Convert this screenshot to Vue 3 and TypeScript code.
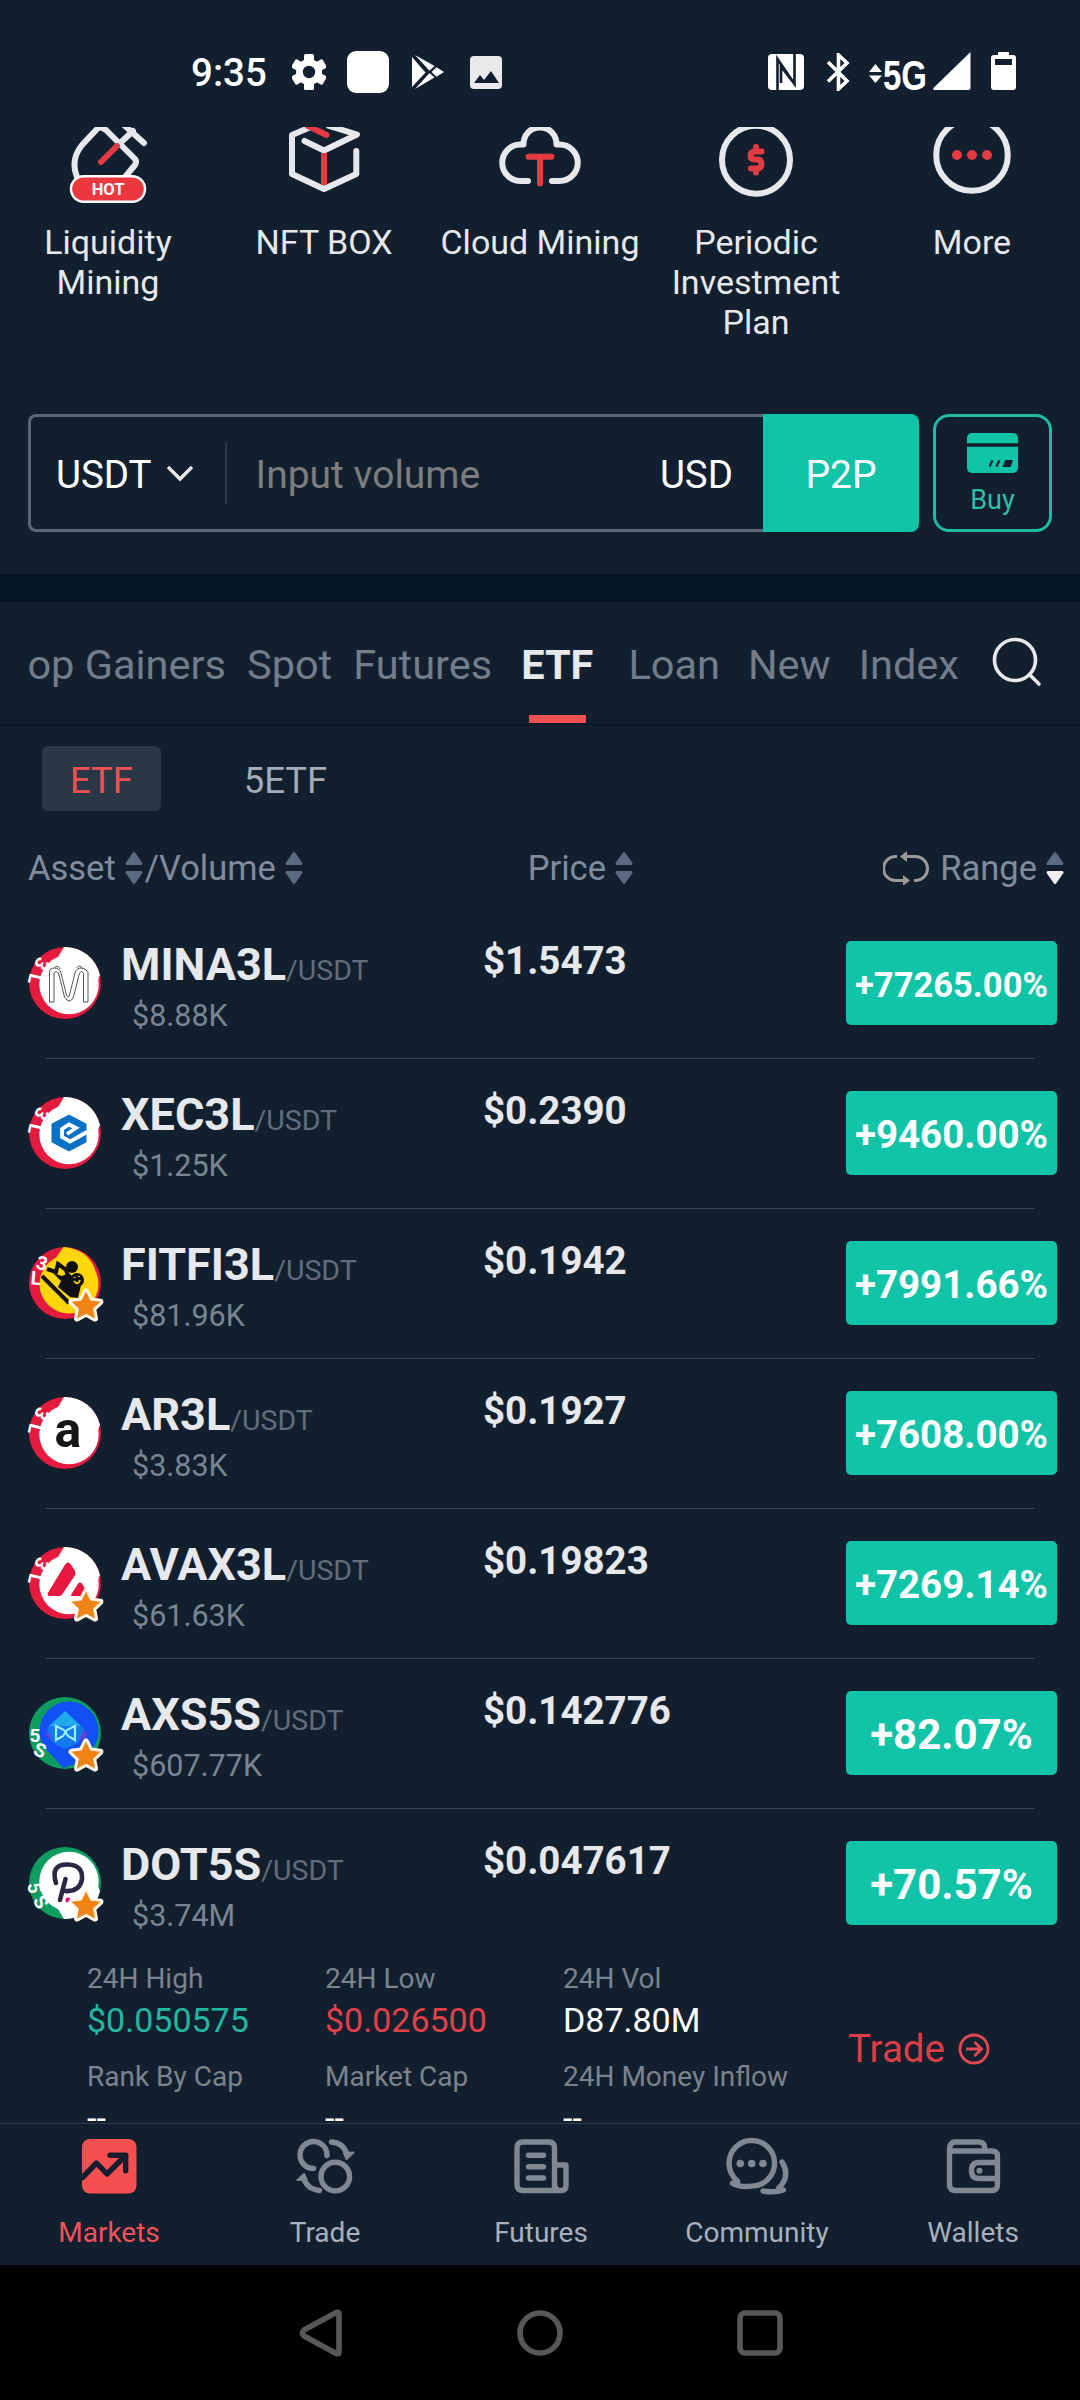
<template>
  <div class="screen">
    <!-- 状态栏 -->
    <div class="status-bar">
      <div class="status-left">
        <span class="time">9:35</span>
        <svg class="gear" width="34" height="36" viewBox="0 0 34 36">
          <g transform="translate(17 18)" fill="#fff">
            <rect v-for="n in 3" :key="n" x="-5" y="-18" width="10" height="36" rx="1.5" :transform="`rotate(${n * 60})`" />
            <circle r="13" />
            <circle r="6.2" fill="#121f2f" />
          </g>
        </svg>
        <span class="white-box"></span>
        <svg class="play" width="34" height="36" viewBox="0 0 34 36" fill="#fff">
          <path d="M1 3v30l13.500-14.600z" />
          <path d="M4 1l19.500 11-5 4.800z" />
          <path d="M4 35l19.500-11.500-5-4.500z" />
          <path d="M25.500 13.200l7.500 4.800-7.500 4.700-5-4.700z" />
        </svg>
        <svg class="photo" width="32" height="33" viewBox="0 0 32 33">
          <rect width="32" height="33" rx="4" fill="#e7e9eb" />
          <path d="M4 27l6-8 4 5 7-9 8 12z" fill="#121f2f" />
        </svg>
      </div>
      <div class="status-right">
        <svg class="nfc" width="36" height="36" viewBox="0 0 36 36">
          <rect width="36" height="36" rx="4" fill="#fff" />
          <path d="M9.500 36V5l17 25V15.500M26.500 0v30L13 12.500V29" fill="none" stroke="#121f2f" stroke-width="2.600" />
        </svg>
        <svg class="bt" width="24" height="38" viewBox="0 0 24 38" fill="none" stroke="#fff" stroke-width="3.600">
          <path d="M1 9l19 19-8.500 8V2l8.500 8L1 28.500" />
        </svg>
        <svg class="net" width="60" height="36" viewBox="0 0 60 36" fill="#fff">
          <path d="M0 15l6.500-8 6.500 8zM0 18.500l6.500 7.500 6.500-7.500z" />
          <text x="14" y="33" font-size="42" font-weight="700" textLength="44" lengthAdjust="spacingAndGlyphs">5G</text>
        </svg>
        <svg class="signal" width="38" height="38" viewBox="0 0 38 38" fill="#fff">
          <path d="M37.500 0v36q0 2-2 2H1.500q-2-.5-.8-2.200z" />
        </svg>
        <svg class="battery" width="25" height="38" viewBox="0 0 25 38">
          <path d="M7 0h11v3h4q3 0 3 3v29q0 3-3 3H3q-3 0-3-3V6q0-3 3-3h4z" fill="#fff" />
          <rect x="4" y="7" width="17" height="6" fill="#121f2f" />
        </svg>
      </div>
    </div>

    <div class="content">
      <!-- 快捷入口 -->
      <div class="menu">
        <div v-for="item in menuItems" :key="item.id" class="menu-item">
          <svg class="menu-icon" width="88" height="80" viewBox="-4 0 88 80">
            <g v-if="item.id === 'liquidity'">
              <path d="M57 50l10-12q2-3 0-6L39 4Q34-1 30 1L14 18Q2 33 9 50M50 18L65 4M56-2l20 18" />
              <path class="red" d="M33 35l16-16" />
              <rect x="3" y="49.200" width="74" height="25.600" rx="12.800" class="hot-bg" />
              <text x="40" y="68" class="hot-text">HOT</text>
            </g>
            <g v-else-if="item.id === 'nft'">
              <path d="M29-1L8 8v39l32 15 32.300-15V24M45-1l28 8.500L40 23.500 20.500 14" />
              <path class="red" d="M24-1l18.500 9" />
              <path class="red butt" d="M40 26v32" />
            </g>
            <g v-else-if="item.id === 'cloud'">
              <path d="M28 54h-7.500a18.250 18.250 0 0 1 0-36.500h3C23.500 8 30 .5 40 .5s16.500 7.500 16.500 17h3a18.250 18.250 0 0 1 0 36.500H52" />
              <path class="red" d="M28.500 29.700h23M40 30v26.500" />
            </g>
            <g v-else-if="item.id === 'plan'">
              <circle cx="40" cy="32.700" r="34" />
              <path class="red" d="M45.500 24.500h-6q-5 0-5 4t5 4h1q5 0 5 4.500t-5 4.500h-5.500M40 20v3M40 42.500v3" />
            </g>
            <g v-else>
              <circle cx="40" cy="28" r="35.800" />
              <circle v-for="x in [25, 40, 55]" :key="x" class="dot" :cx="x" cy="28" r="5" />
            </g>
          </svg>
          <span class="menu-label">{{ item.label }}</span>
        </div>
      </div>

      <!-- 快捷买币 -->
      <div class="quick-buy">
        <div class="input-box">
          <span class="coin">USDT</span>
          <svg class="chevron" width="28" height="18" viewBox="0 0 28 18">
            <path d="M2 3l12 12L26 3" fill="none" stroke="#e6e8ec" stroke-width="3.400" />
          </svg>
          <span class="split"></span>
          <span class="placeholder">Input volume</span>
          <span class="fiat">USD</span>
        </div>
        <button class="p2p-btn">P2P</button>
        <button class="buy-btn">
          <svg width="51" height="40" viewBox="0 0 52 40" preserveAspectRatio="none">
            <rect width="52" height="40" rx="5" fill="#11c3a7" />
            <path d="M0 12h52" stroke="#121f2f" stroke-width="3.500" />
            <path d="M23 33.500l3-6M30 33.500l3-6" stroke="#121f2f" stroke-width="2.200" />
            <path d="M36 34l3-7h8l-2.500 7z" fill="#121f2f" />
          </svg>
          <span>Buy</span>
        </button>
      </div>

      <div class="band"></div>

      <!-- 行情分类 -->
      <div class="tabs">
        <div
          v-for="tab in tabs"
          :key="tab"
          class="tab"
          :class="[tab.toLowerCase().replace(' ', '-'), { active: tab === activeTab }]"
          @click="activeTab = tab"
        >
          <span>{{ tab }}</span>
        </div>
        <svg class="search" width="50" height="50" viewBox="0 0 50 50" fill="none" stroke="#e6e8ec" stroke-width="3.600">
          <circle cx="23" cy="23" r="20.500" />
          <path d="M37.500 37.500L47 47" stroke-linecap="round" />
        </svg>
      </div>

      <div class="sub-tabs">
        <span
          v-for="sub in subTabs"
          :key="sub"
          class="sub-tab"
          :class="{ active: sub === activeSub }"
          @click="activeSub = sub"
        >{{ sub }}</span>
      </div>

      <!-- 表头 -->
      <div class="list-header">
        <div v-for="col in columns" :key="col.key" class="col" :class="col.key">
          <svg v-if="col.key === 'range'" class="loop" width="46" height="34" viewBox="0 0 46 34">
            <path d="M14 5.500h-1.500a11 11 0 0 0 0 24H22M22 5.500h10.500a11 11 0 0 1 0 24H31" fill="none" stroke="#9a9a9a" stroke-width="3" />
            <path d="M17 5.500l7-5.500v11zM27 29.500l-7-5.500v11z" fill="#9a9a9a" />
          </svg>
          <span>{{ col.label }}</span>
          <svg class="sort" width="18" height="32" viewBox="0 0 18 32">
            <path d="M9 1.500l7 10H2z" fill="#5d6b82" stroke="#5d6b82" stroke-width="3" stroke-linejoin="round" />
            <path
              d="M9 30.500l7-10H2z"
              :fill="col.desc ? '#f0f0f0' : '#5d6b82'"
              :stroke="col.desc ? '#f0f0f0' : '#5d6b82'"
              stroke-width="3"
              stroke-linejoin="round"
            />
          </svg>
        </div>
      </div>

      <!-- 币种列表 -->
      <div v-for="row in rows" :key="row.name" class="row">
        <svg class="coin-icon" width="72" height="72" viewBox="0 0 72 72">
          <circle cx="36" cy="36" r="36" :fill="row.short ? '#0f9d5f' : '#e41a3f'" />

          <g v-if="row.name === 'FITFI3L'">
            <circle cx="40" cy="37" r="29.500" fill="#ffd60a" />
            <path d="M34.500 0Q58 2 66 22L52 40 22 18z" fill="#ffd60a" />
            <path d="M13 29l27 27M18 22l9 3 2-8 8 6 3 10" fill="none" stroke="#111" stroke-width="4" />
            <path d="M24 26l9 3 7-3 12 12-3 13-8-1-12-10 3-6z" fill="#111" />
            <circle cx="43" cy="20" r="6" fill="#111" />
            <circle cx="48" cy="33" r="7" fill="#111" />
            <path d="M45 34q4 5 6-1M45.500 30v1M50 29v1" fill="none" stroke="#ffd60a" stroke-width="1.800" />
          </g>
          <g v-else-if="row.name === 'AXS5S'">
            <circle cx="40" cy="34" r="29.500" fill="#124ff5" />
            <path d="M14 48L34 71 56 64 52 40z" fill="#124ff5" />
            <path d="M16 37l8-8v16zM59 37l-8-8v16z" fill="#6a3fd8" />
            <path d="M36 14l19 18-6 14-13 6-12-6-6-14z" fill="#1478ee" />
            <path d="M36 14l16 15H20z" fill="#1fa9e8" />
            <path d="M27 29v14l7-4 4-6 8-4v14l-7-4-4-6z" fill="none" stroke="#9af0ff" stroke-width="2.200" />
          </g>
          <g v-else>
            <circle cx="40" :cy="row.short ? 34.500 : 37.500" r="29.700" fill="#fff" />
            <path v-if="row.short" d="M35 72A36 36 0 0 0 71 44L60 18 22 50z" fill="#fff" />
            <path v-else d="M35 0A36 36 0 0 1 71 28L60 54 22 22z" fill="#fff" />
          </g>

          <g v-if="row.name === 'MINA3L'" fill="none" stroke="#555" stroke-width="1">
            <path d="M20.500 55V25q0-4 5-4t6.500 5l5.500 22q1.500 4 3 0L46 26q1.500-5 6-5t7 4v30h-4.500V26q-2-3-4 0l-6 24q-4 8-9 0l-6-24q-2.500-3-4.500 0v29z" />
            <path d="M25.500 21q3-4 5.500 1M47.500 21q3-4 6 0" />
          </g>
          <g v-else-if="row.name === 'XEC3L'">
            <path d="M40 18l17 9v18l-17 9-17-9V27z" fill="#0a71c6" stroke="#0a71c6" stroke-linejoin="round" />
            <path d="M58 35L41 44.500l-8-4.500v-8l7-4.500 7 3.500-9 6" fill="none" stroke="#fff" stroke-width="3.800" />
          </g>
          <text v-else-if="row.name === 'AR3L'" class="ar-text" x="39" y="49.500">a</text>
          <g v-else-if="row.name === 'AVAX3L'" fill="#e8173f" stroke="#e8173f" stroke-width="2" stroke-linejoin="round">
            <path d="M37 18q2-3 4 0l4 6q1 2 0 4L33 46q-1 2-3 2H21q-2 0-1-2z" />
            <path d="M43 48l7-11q1-1 2 0l6 10q0 1-1 1z" />
          </g>
          <g v-else-if="row.name === 'DOT5S'" fill="none" stroke="#2c2745" stroke-width="4.600" stroke-linecap="round">
            <path d="M27 36Q21 17 39 17.500 54 18 53 32 51 45 36 44M36.500 32L31 53" />
            <circle cx="39" cy="53" r="2.500" fill="#e6007a" stroke="none" />
          </g>

          <text
            v-for="(t, i) in tagFor(row)"
            :key="i"
            class="tag-text"
            :transform="`translate(${t.x} ${t.y}) rotate(${t.r})`"
            y="6.800"
          >{{ t.ch }}</text>

          <path
            v-if="row.star"
            class="star"
            d="M57 44.500l4.400 9 10 1.300-7.300 6.900 1.900 9.800-9-4.800-9 4.800 1.900-9.800-7.300-6.900 10-1.300z"
          />
        </svg>
        <div class="asset">
          <div class="pair"><span class="name">{{ row.name }}</span><span class="quote">/USDT</span></div>
          <div class="volume">{{ row.volume }}</div>
        </div>
        <div class="price">{{ row.price }}</div>
        <div class="change" :class="row.size">{{ row.change }}</div>
      </div>

      <!-- 展开详情 -->
      <div class="details">
        <div v-for="d in details" :key="d.label" class="detail">
          <div class="detail-label">{{ d.label }}</div>
          <div class="detail-value" :class="d.color">{{ d.value }}</div>
        </div>
        <div class="trade-link">
          <span>Trade</span>
          <svg width="32" height="32" viewBox="0 0 32 32" fill="none" stroke="#e24850" stroke-width="2.800">
            <circle cx="16" cy="16" r="14" />
            <path d="M8 16h15M16.500 9l7 7-7 7" />
          </svg>
        </div>
      </div>
    </div>

    <!-- 底部导航 -->
    <div class="nav">
      <div
        v-for="n in navItems"
        :key="n"
        class="nav-item"
        :class="{ active: n === activeNav }"
        @click="activeNav = n"
      >
        <svg class="nav-icon" width="66" height="60" viewBox="-3 0 66 60">
          <g v-if="n === 'Markets'">
            <rect x="3" y="3" width="54.500" height="54.500" rx="8" fill="#f55050" stroke="none" />
            <path d="M3.500 41.500l14-14.500 10.500 11L46 20M31 19.300h15.700v15.400" stroke="#161c2e" />
          </g>
          <g v-else-if="n === 'Trade'">
            <path d="M32 19.500A13.500 13.500 0 1 0 18.500 32.500M36.500 6Q49 7 52 19M24.500 54.500Q12 53 8.500 42" />
            <circle cx="40.300" cy="40.600" r="14.300" />
            <path class="head" d="M49 17l9.500-.5-7 6.500zM11.500 43.500L2.500 44l6.500-6z" />
          </g>
          <g v-else-if="n === 'Futures'">
            <path d="M43.500 54.500H12q-6 0-6-6V12q0-6 6-6h25.500q6 0 6 6v42.500h7q4.500 0 4.500-5V29H44M43.500 46q0 8.500 5 8.500" />
            <path d="M17.500 19.300h15M17.500 30.700h15M17.500 42h15" />
          </g>
          <g v-else-if="n === 'Community'">
            <path d="M10.500 45Q2 38 2 27.300a22.800 22.800 0 1 1 22.800 22.800Q13 51.500 5.500 47.300q6 .7 5-2.300M55 26q9 14-3.500 26.500l5 1.500q-9 3-20.500 1" />
            <circle v-for="x in [13.300, 24.700, 36]" :key="x" class="fill" :cx="x" cy="27.500" r="3.800" />
          </g>
          <g v-else>
            <path d="M6.500 14.500v34q0 6 6 6h36q6 0 6-6V20q0-5-6-5h-42Q6.500 6 12 6h24q6 0 6 8M54 26.500H36q-7.500 0-7.500 8t7.500 8h18" />
            <circle class="fill" cx="36.500" cy="34.700" r="3" />
          </g>
        </svg>
        <span>{{ n }}</span>
      </div>
    </div>

    <!-- 系统按键 -->
    <div class="system-bar">
      <svg width="48" height="48" viewBox="0 0 48 48"><path d="M43 5v38q0 2.500-3 1.500L8 27q-3-3 0-6L40 3.500Q43 2.500 43 5z" /></svg>
      <svg width="48" height="48" viewBox="0 0 48 48"><circle cx="24" cy="24" r="20" /></svg>
      <svg width="48" height="48" viewBox="0 0 48 48"><rect x="4" y="4" width="40" height="40" rx="5" /></svg>
    </div>
  </div>
</template>

<script setup lang="ts">
import { ref } from 'vue'

interface CoinRow {
  name: string
  volume: string
  price: string
  change: string
  size: 'small' | 'medium' | 'large'
  short?: boolean
  star?: boolean
}

interface Tag {
  ch: string
  x: number
  y: number
  r: number
}

const menuItems = [
  { id: 'liquidity', label: 'Liquidity Mining' },
  { id: 'nft', label: 'NFT BOX' },
  { id: 'cloud', label: 'Cloud Mining' },
  { id: 'plan', label: 'Periodic Investment Plan' },
  { id: 'more', label: 'More' }
]

const tabs = ['op Gainers', 'Spot', 'Futures', 'ETF', 'Loan', 'New', 'Index']
const activeTab = ref('ETF')

const subTabs = ['ETF', '5ETF']
const activeSub = ref('ETF')

const columns = [
  { key: 'asset-col', label: 'Asset', desc: false },
  { key: 'volume-col', label: '/Volume', desc: false },
  { key: 'price-col', label: 'Price', desc: false },
  { key: 'range', label: 'Range', desc: true }
]

const rows: CoinRow[] = [
  { name: 'MINA3L', volume: '$8.88K', price: '$1.5473', change: '+77265.00%', size: 'small' },
  { name: 'XEC3L', volume: '$1.25K', price: '$0.2390', change: '+9460.00%', size: 'medium' },
  { name: 'FITFI3L', volume: '$81.96K', price: '$0.1942', change: '+7991.66%', size: 'medium', star: true },
  { name: 'AR3L', volume: '$3.83K', price: '$0.1927', change: '+7608.00%', size: 'medium' },
  { name: 'AVAX3L', volume: '$61.63K', price: '$0.19823', change: '+7269.14%', size: 'medium', star: true },
  { name: 'AXS5S', volume: '$607.77K', price: '$0.142776', change: '+82.07%', size: 'large', short: true, star: true },
  { name: 'DOT5S', volume: '$3.74M', price: '$0.047617', change: '+70.57%', size: 'large', short: true, star: true }
]

const details = [
  { label: '24H High', value: '$0.050575', color: 'up' },
  { label: '24H Low', value: '$0.026500', color: 'down' },
  { label: '24H Vol', value: 'D87.80M', color: '' },
  { label: 'Rank By Cap', value: '--', color: '' },
  { label: 'Market Cap', value: '--', color: '' },
  { label: '24H Money Inflow', value: '--', color: '' }
]

const navItems = ['Markets', 'Trade', 'Futures', 'Community', 'Wallets']
const activeNav = ref('Markets')

// 图标边缘的杠杆倍数标记
const tagFor = (row: CoinRow): Tag[] => {
  if (row.name === 'FITFI3L') {
    return [{ ch: '3', x: 13, y: 16, r: 15 }, { ch: 'L', x: 7, y: 31, r: 5 }]
  }
  if (row.name === 'AXS5S') {
    return [{ ch: '5', x: 6, y: 38, r: 0 }, { ch: 'S', x: 11, y: 53, r: 20 }]
  }
  if (row.short) {
    return [{ ch: '5', x: 6, y: 41, r: 80 }, { ch: 'S', x: 12, y: 55, r: 60 }]
  }
  return [{ ch: '3', x: 13, y: 17, r: 122 }, { ch: 'L', x: 6.5, y: 32, r: 103 }]
}
</script>

<style>
body {
  background: #121f2f;
}
</style>

<style scoped>
.screen {
  width: 1080px;
  height: 2400px;
  display: flex;
  flex-direction: column;
  overflow: hidden;
  background: #121f2f;
  color: #e6e8ec;
  font-family: Roboto, "Liberation Sans", sans-serif;
}

svg {
  display: block;
  flex-shrink: 0;
}

button {
  font-family: inherit;
  margin: 0;
  padding: 0;
}

/* 状态栏 */
.status-bar {
  height: 127px;
  box-sizing: border-box;
  padding: 17px 64px 0 191px;
  display: flex;
  justify-content: space-between;
  align-items: center;
  flex-shrink: 0;
}

.status-left, .status-right {
  display: flex;
  align-items: center;
}

.time {
  width: 101px;
  color: #fff;
  font-size: 38.5px;
  font-weight: 500;
}

.white-box {
  width: 42px;
  height: 42px;
  margin: 0 22px 0 21px;
  border-radius: 9px;
  background: #fff;
}

.photo {
  margin-left: 25px;
}

.nfc {
  margin-right: 23px;
}

.bt {
  margin-right: 18px;
}

.net {
  margin-top: 6px;
  overflow: visible;
}

.net text {
  font-family: "Liberation Sans", sans-serif;
}

.signal {
  margin: 0 20px 0 4px;
}

.signal, .battery {
  margin-top: -3px;
}

.content {
  height: 1996px;
  flex-shrink: 0;
  overflow: hidden;
}

/* 快捷入口 */
.menu {
  height: 287px;
  display: grid;
  grid-template-columns: repeat(5, 216px);
}

.menu-item {
  display: flex;
  flex-direction: column;
  align-items: center;
}

.menu-icon {
  fill: none;
  stroke: #e6e8ec;
  stroke-width: 6;
  stroke-linecap: round;
  stroke-linejoin: round;
}

.menu-icon .red {
  stroke: #e23b41;
}

.menu-icon .butt {
  stroke-linecap: butt;
}

.menu-icon .dot {
  fill: #e23b41;
  stroke: none;
}

.hot-bg {
  fill: #ea383e;
  stroke: #fff;
  stroke-width: 2.4;
}

.hot-text {
  fill: #fff;
  stroke: none;
  font-size: 16.5px;
  font-weight: 700;
  text-anchor: middle;
}

.menu-label {
  max-width: 200px;
  margin-top: 15px;
  font-size: 34px;
  line-height: 40px;
  text-align: center;
}

/* 快捷买币 */
.quick-buy {
  height: 118px;
  padding: 0 28px 42px;
  display: flex;
}

.input-box {
  width: 735px;
  box-sizing: border-box;
  display: flex;
  align-items: center;
  padding: 0 30px 0 25px;
  border: 3px solid #5c6676;
  border-right: none;
  border-radius: 8px 0 0 8px;
  color: #fff;
  font-size: 38.5px;
}

.coin, .placeholder, .fiat {
  margin-top: 3px;
}

.chevron {
  margin-left: 14px;
}

.split {
  width: 2px;
  height: 62px;
  margin: 0 29px 0 31px;
  background: #2a3746;
}

.placeholder {
  flex: 1;
  color: #7d7d7d;
  font-size: 39px;
}

.p2p-btn {
  width: 156px;
  padding-top: 3px;
  border: none;
  border-radius: 0 8px 8px 0;
  background: #11c3a7;
  color: #fff;
  font-size: 39px;
}

.buy-btn {
  width: 119px;
  margin-left: 14px;
  box-sizing: border-box;
  display: flex;
  flex-direction: column;
  align-items: center;
  padding-top: 16px;
  border: 3px solid #20bba3;
  border-radius: 16px;
  background: none;
  color: #2fbfa8;
  font-size: 27px;
}

.buy-btn span {
  margin-top: 11px;
}

.band {
  height: 28px;
  background: #051725;
}

/* 行情分类 */
.tabs {
  height: 121px;
  display: flex;
  align-items: stretch;
  padding-left: 28px;
  border-bottom: 3px solid #0a1828;
}

.tab {
  position: relative;
  display: flex;
  align-items: center;
  padding-top: 3px;
  margin-right: 21px;
  color: #737d89;
  font-size: 41.5px;
  white-space: nowrap;
}

.tab.op-gainers {
  width: 198px;
  justify-content: flex-end;
}

.tab.futures {
  margin-right: 29px;
}

.tab.etf {
  margin-right: 35px;
}

.tab.loan, .tab.new {
  margin-right: 28px;
}

.tab.index {
  margin-right: 0;
}

.tab.active {
  color: #e6e8ec;
  font-weight: 700;
}

.tab.active::after {
  content: '';
  position: absolute;
  left: 50%;
  bottom: 0;
  width: 57px;
  height: 8px;
  margin-left: -28.5px;
  background: #ee5152;
}

.search {
  margin: 35px 38px 0 auto;
}

.sub-tabs {
  display: flex;
  gap: 65px;
  padding: 20px 42px 0;
}

.sub-tab {
  width: 119px;
  height: 65px;
  border-radius: 6px;
  color: #a4acb7;
  font-size: 36.5px;
  line-height: 70px;
  text-align: center;
}

.sub-tab.active {
  background: #2a3746;
  color: #ee5152;
}

/* 表头 */
.list-header {
  height: 60px;
  margin: 27px 16px 11px 28px;
  display: flex;
  align-items: center;
  color: #808b9b;
  font-size: 34.5px;
}

.col {
  display: flex;
  align-items: center;
}

.sort {
  margin-left: 9px;
}

.asset-col .sort {
  margin-right: 2px;
}

.price-col {
  margin-left: 225px;
}

.range {
  margin-left: auto;
}

.loop {
  margin-right: 11px;
}

/* 币种列表 */
.row {
  position: relative;
  height: 150px;
  box-sizing: border-box;
  padding: 30px 23px 0 29px;
  display: grid;
  grid-template-columns: 92px 362px 363px 211px;
}

.row:not(:nth-last-child(2))::after {
  content: '';
  position: absolute;
  left: 45px;
  right: 45px;
  bottom: 0;
  height: 1px;
  background: #3b4655;
}

.coin-icon {
  margin-top: 8px;
  overflow: visible;
}

.tag-text {
  fill: #fff;
  font-size: 19px;
  font-weight: 700;
  text-anchor: middle;
}

.ar-text {
  fill: #161616;
  font-size: 50px;
  font-weight: 700;
  text-anchor: middle;
}

.star {
  fill: #ef8314;
  stroke: #fff5e8;
  stroke-width: 6;
  stroke-linejoin: round;
  paint-order: stroke;
}

.pair {
  height: 52px;
  line-height: 52px;
  white-space: nowrap;
}

.name {
  font-size: 45px;
  font-weight: 700;
}

.quote {
  color: #626d7b;
  font-size: 28.5px;
}

.volume {
  margin: 7px 0 0 11px;
  color: #7a8592;
  font-size: 30.5px;
  line-height: 36px;
}

.price {
  font-size: 38.5px;
  font-weight: 700;
  line-height: 44px;
}

.change {
  height: 84px;
  margin-top: 2px;
  border-radius: 5px;
  background: #11c3a7;
  color: #fff;
  font-weight: 700;
  line-height: 88px;
  text-align: center;
}

.change.small {
  font-size: 34.5px;
}

.change.medium {
  font-size: 38.5px;
}

.change.large {
  font-size: 42px;
}

/* 展开详情 */
.details {
  position: relative;
  display: grid;
  grid-template-columns: repeat(3, 238px);
  row-gap: 20px;
  padding: 3px 0 0 87px;
}

.detail {
  white-space: nowrap;
}

.detail-label {
  color: #7c838c;
  font-size: 28px;
  line-height: 33px;
}

.detail-value {
  margin-top: 5px;
  color: #fff;
  font-size: 34px;
  line-height: 40px;
}

.detail-value.up {
  color: #22b79f;
}

.detail-value.down {
  color: #e04048;
}

.trade-link {
  position: absolute;
  right: 90px;
  top: 67px;
  display: flex;
  align-items: center;
  gap: 13px;
  color: #de3d45;
  font-size: 38.5px;
  line-height: 46px;
}

/* 底部导航 */
.nav {
  height: 142px;
  box-sizing: border-box;
  flex-shrink: 0;
  display: grid;
  grid-template-columns: repeat(5, 216px);
  padding-left: 1px;
  border-top: 1px solid #2f3c4b;
}

.nav-item {
  display: flex;
  flex-direction: column;
  align-items: center;
  padding-top: 12px;
  color: #a7b0bc;
  font-size: 28px;
}

.nav-item span {
  margin-top: 20px;
  line-height: 33px;
}

.nav-item.active {
  color: #f05258;
}

.nav-icon {
  fill: none;
  stroke: #7f8893;
  stroke-width: 5.4;
  stroke-linecap: round;
  stroke-linejoin: round;
}

.nav-icon .fill {
  fill: #7f8893;
  stroke: none;
}

.nav-icon .head {
  fill: #7f8893;
  stroke-width: 2;
}

/* 系统按键 */
.system-bar {
  flex: 1;
  display: flex;
  justify-content: center;
  align-items: center;
  gap: 172px;
  background: #000;
}

.system-bar svg {
  fill: none;
  stroke: #585858;
  stroke-width: 5.6;
}
</style>
